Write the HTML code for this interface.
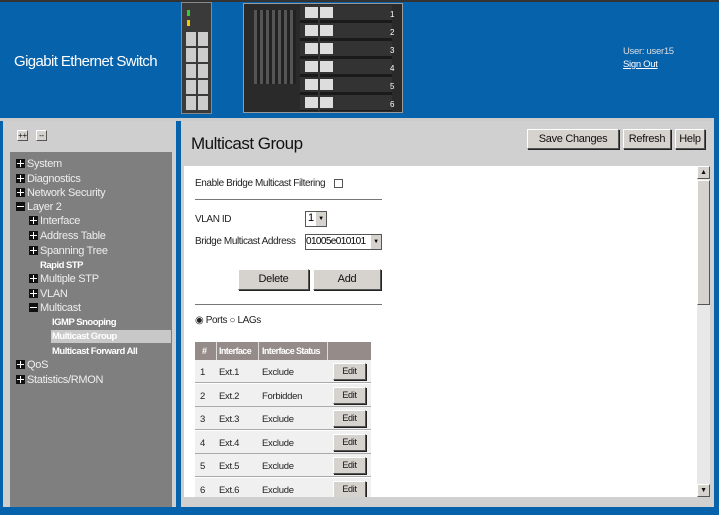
<!DOCTYPE html>
<html><head><style>
*{margin:0;padding:0;box-sizing:border-box}
body{width:719px;height:515px;background:#0762ac;font-family:"Liberation Sans",sans-serif;position:relative;overflow:hidden;font-size:11px;letter-spacing:-0.3px}
.a{position:absolute;white-space:nowrap}
.btn{position:absolute;background:#d6d3ce;border:1px solid;border-color:#fff #555 #555 #fff;box-shadow:1px 1px 0 #222;text-align:center;color:#111;font-size:11px}
.tree div{position:absolute;color:#eee;font-size:11px;white-space:nowrap}
.pl{display:inline-block;position:relative;width:9px;height:9px;background:#111;margin-right:2px;vertical-align:-1px}
.pl:before{content:"";position:absolute;left:1px;top:4px;width:7px;height:1px;background:#fff}
.pl.p:after{content:"";position:absolute;left:4px;top:1px;width:1px;height:7px;background:#fff}
.b{font-weight:bold;font-size:9.5px!important;color:#fff!important;letter-spacing:-0.5px}
.row{position:absolute;left:195px;width:176px;height:23px;background:#f0f0f0;border-bottom:1px solid #aaa;font-size:9.5px;color:#222}
.row span{position:absolute;top:7px}
.sm{font-size:10px;color:#222;letter-spacing:-0.4px}
</style></head><body>
<div class="a" style="left:0;top:0;width:719px;height:2px;background:#333"></div>
<div class="a" style="left:14px;top:53px;color:#fff;font-size:15px;letter-spacing:-0.6px">Gigabit Ethernet Switch</div>
<!-- small module -->
<div class="a" style="left:181px;top:2px;width:31px;height:112px;background:#3a3a3a;border:1px solid #888"></div>
<div class="a" style="left:187px;top:10px;width:3px;height:6px;background:#3c3"></div>
<div class="a" style="left:187px;top:20px;width:3px;height:6px;background:#ec0"></div>
<div class="a" style="left:186px;top:32px;width:22px;height:78px;background:repeating-linear-gradient(#ccc 0 14px,#3a3a3a 14px 16px)"></div>
<div class="a" style="left:196px;top:32px;width:2px;height:78px;background:#3a3a3a"></div>
<!-- chassis -->
<div class="a" style="left:243px;top:3px;width:160px;height:110px;background:#2a2a2a;border:1px solid #999"></div>
<div class="a" style="left:254px;top:10px;width:42px;height:74px;background:repeating-linear-gradient(90deg,#555 0 3px,#222 3px 6px)"></div>
<div class="a" style="left:300px;top:5px;width:92px;height:106px;background:repeating-linear-gradient(#333 0 15px,#1a1a1a 15px 18px)"></div>
<div class="a" style="left:305px;top:7px;width:28px;height:104px;background:repeating-linear-gradient(#ddd 0 11px,transparent 11px 18px)"></div>
<div class="a" style="left:318px;top:7px;width:2px;height:104px;background:#333"></div>
<div class="a" style="left:390px;top:6px;color:#fff;font-size:8px;line-height:18px">1<br>2<br>3<br>4<br>5<br>6</div>
<div class="a" style="left:623px;top:46px;color:#ddd;font-size:9.5px">User: user15</div>
<div class="a" style="left:623px;top:59px;color:#fff;font-size:9.5px;text-decoration:underline">Sign Out</div>
<div class="a" style="left:0;top:118px;width:714px;height:3px;background:#ccc"></div>
<!-- sidebar -->
<div class="a" style="left:3px;top:121px;width:173px;height:386px;background:#cfcfcf"></div>
<div class="btn" style="left:17px;top:130px;width:11px;height:11px;font-size:8px;line-height:9px;box-shadow:none">++</div>
<div class="btn" style="left:36px;top:130px;width:11px;height:11px;font-size:8px;line-height:9px;box-shadow:none">--</div>
<div class="a" style="left:10px;top:152px;width:162px;height:355px;background:#7f7f7f"></div>
<div class="a" style="left:51px;top:330px;width:120px;height:13px;background:#c8c8c8"></div>
<div class="tree">
<div style="left:16px;top:158px"><span class="pl p"></span>System</div>
<div style="left:16px;top:173px"><span class="pl p"></span>Diagnostics</div>
<div style="left:16px;top:187px"><span class="pl p"></span>Network Security</div>
<div style="left:16px;top:201px"><span class="pl"></span>Layer 2</div>
<div style="left:29px;top:215px"><span class="pl p"></span>Interface</div>
<div style="left:29px;top:230px"><span class="pl p"></span>Address Table</div>
<div style="left:29px;top:245px"><span class="pl p"></span>Spanning Tree</div>
<div class="b" style="left:40px;top:260px">Rapid STP</div>
<div style="left:29px;top:273px"><span class="pl p"></span>Multiple STP</div>
<div style="left:29px;top:288px"><span class="pl p"></span>VLAN</div>
<div style="left:29px;top:302px"><span class="pl"></span>Multicast</div>
<div class="b" style="left:52px;top:317px">IGMP Snooping</div>
<div class="b" style="left:52px;top:331px">Multicast Group</div>
<div class="b" style="left:52px;top:346px">Multicast Forward All</div>
<div style="left:16px;top:359px"><span class="pl p"></span>QoS</div>
<div style="left:16px;top:374px"><span class="pl p"></span>Statistics/RMON</div>
</div>
<!-- main -->
<div class="a" style="left:181px;top:121px;width:533px;height:386px;background:#d0d0d0"></div>
<div class="a" style="left:191px;top:134px;font-size:17px;color:#111;letter-spacing:-0.5px">Multicast Group</div>
<div class="btn" style="left:527px;top:129px;width:92px;height:20px;line-height:18px">Save Changes</div>
<div class="btn" style="left:623px;top:129px;width:48px;height:20px;line-height:18px">Refresh</div>
<div class="btn" style="left:675px;top:129px;width:30px;height:20px;line-height:18px">Help</div>
<div class="a" style="left:184px;top:166px;width:513px;height:331px;background:#fff"></div>
<div class="a" style="left:697px;top:166px;width:13px;height:331px;background:#e8e8e8"></div>
<div class="btn" style="left:697px;top:166px;width:13px;height:13px;font-size:7px;line-height:11px;box-shadow:none">▲</div>
<div class="a" style="left:697px;top:180px;width:13px;height:125px;background:#d6d3ce;border:1px solid;border-color:#fff #555 #555 #fff"></div>
<div class="btn" style="left:697px;top:484px;width:13px;height:13px;font-size:7px;line-height:11px;box-shadow:none">▼</div>
<div class="a sm" style="left:195px;top:178px">Enable Bridge Multicast Filtering</div>
<div class="a" style="left:334px;top:179px;width:9px;height:9px;border:1px solid #555;background:#fff"></div>
<div class="a" style="left:195px;top:199px;width:187px;height:1px;background:#777"></div>
<div class="a sm" style="left:195px;top:214px">VLAN ID</div>
<div class="a sm" style="left:195px;top:236px">Bridge Multicast Address</div>
<div class="a" style="left:305px;top:211px;width:22px;height:16px;border:1px solid #555;background:#fff;font-size:11px;padding-left:2px">1</div>
<div class="a" style="left:316px;top:212px;width:10px;height:14px;background:#d6d3ce;font-size:6px;text-align:center;line-height:14px">▼</div>
<div class="a" style="left:305px;top:234px;width:77px;height:16px;border:1px solid #555;background:#fff;font-size:10px;line-height:14px;letter-spacing:-0.6px">01005e010101</div>
<div class="a" style="left:371px;top:235px;width:10px;height:14px;background:#d6d3ce;font-size:6px;text-align:center;line-height:14px">▼</div>
<div class="btn" style="left:238px;top:269px;width:71px;height:21px;line-height:19px">Delete</div>
<div class="btn" style="left:313px;top:269px;width:68px;height:21px;line-height:19px">Add</div>
<div class="a" style="left:195px;top:304px;width:187px;height:1px;background:#777"></div>
<div class="a sm" style="left:195px;top:315px">◉ Ports ○ LAGs</div>
<div class="a" style="left:195px;top:342px;width:176px;height:18px;background:#958c89;color:#fff;font-size:9px;font-weight:bold;letter-spacing:-0.6px">
<span class="a" style="left:7px;top:4px">#</span><span class="a" style="left:21px;top:0;width:1px;height:18px;background:#ddd"></span>
<span class="a" style="left:24px;top:4px">Interface</span><span class="a" style="left:63px;top:0;width:1px;height:18px;background:#ddd"></span>
<span class="a" style="left:67px;top:4px">Interface Status</span><span class="a" style="left:132px;top:0;width:1px;height:18px;background:#ddd"></span>
</div>
<div class="row" style="top:360px"><span style="left:5px">1</span><span style="left:24px">Ext.1</span><span style="left:67px">Exclude</span><div class="btn" style="left:138px;top:3px;width:33px;height:17px;line-height:15px;font-size:9px">Edit</div></div>
<div class="row" style="top:384px"><span style="left:5px">2</span><span style="left:24px">Ext.2</span><span style="left:67px">Forbidden</span><div class="btn" style="left:138px;top:3px;width:33px;height:17px;line-height:15px;font-size:9px">Edit</div></div>
<div class="row" style="top:407px"><span style="left:5px">3</span><span style="left:24px">Ext.3</span><span style="left:67px">Exclude</span><div class="btn" style="left:138px;top:3px;width:33px;height:17px;line-height:15px;font-size:9px">Edit</div></div>
<div class="row" style="top:431px"><span style="left:5px">4</span><span style="left:24px">Ext.4</span><span style="left:67px">Exclude</span><div class="btn" style="left:138px;top:3px;width:33px;height:17px;line-height:15px;font-size:9px">Edit</div></div>
<div class="row" style="top:454px"><span style="left:5px">5</span><span style="left:24px">Ext.5</span><span style="left:67px">Exclude</span><div class="btn" style="left:138px;top:3px;width:33px;height:17px;line-height:15px;font-size:9px">Edit</div></div>
<div class="row" style="top:478px"><span style="left:5px">6</span><span style="left:24px">Ext.6</span><span style="left:67px">Exclude</span><div class="btn" style="left:138px;top:3px;width:33px;height:17px;line-height:15px;font-size:9px">Edit</div></div>
<div class="a" style="left:184px;top:497px;width:526px;height:10px;background:#d0d0d0"></div>
</body></html>
